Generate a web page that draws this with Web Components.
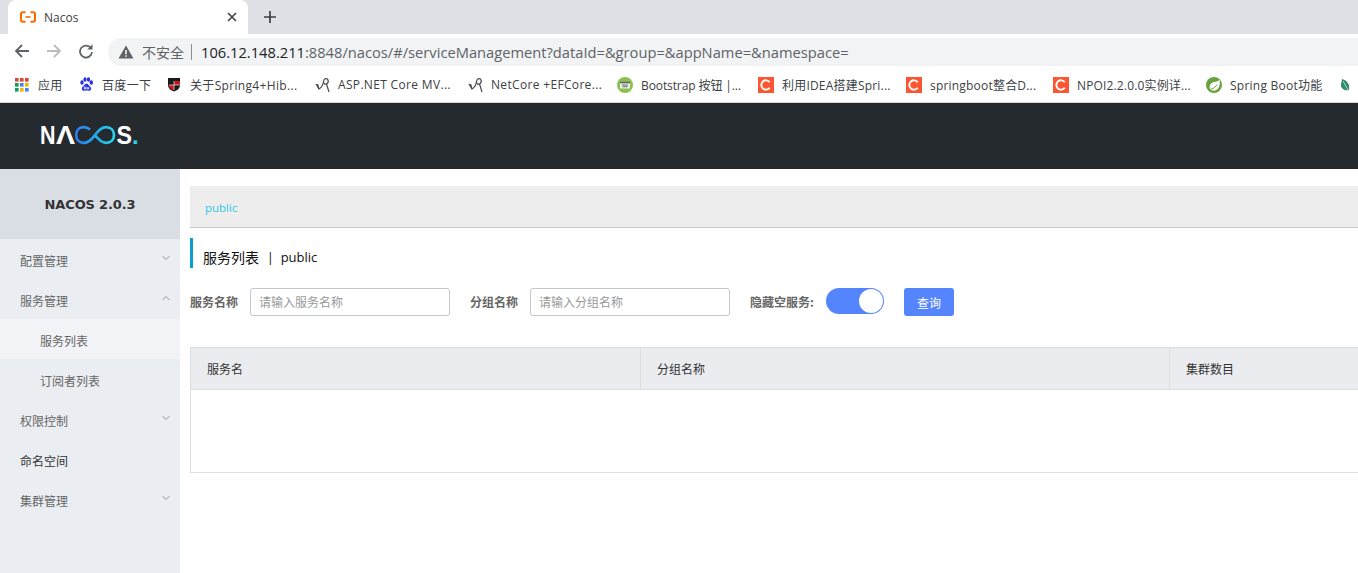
<!DOCTYPE html>
<html lang="zh"><head><meta charset="utf-8"><title>Nacos</title>
<style>
html,body{margin:0;padding:0;height:573px;overflow:hidden;background:#fff;font-family:"Noto Sans","Noto Sans CJK SC",sans-serif}
body{display:flex;flex-direction:column}
</style></head><body>
<browser-tabs></browser-tabs>
<browser-toolbar></browser-toolbar>
<bookmark-bar>
<book-mark w="64" icon="apps">应用</book-mark>
<book-mark w="88" icon="baidu">百度一下</book-mark>
<book-mark w="148" icon="shield">关于Spring4+Hib...</book-mark>
<book-mark w="153" icon="asp">ASP.NET Core MV...</book-mark>
<book-mark w="149" icon="asp">NetCore +EFCore...</book-mark>
<book-mark w="141" icon="boot" style="letter-spacing:-.1px">Bootstrap 按钮 |...</book-mark>
<book-mark w="148" icon="c" style="letter-spacing:.2px">利用IDEA搭建Spri...</book-mark>
<book-mark w="147" icon="c" style="letter-spacing:.2px">springboot整合D...</book-mark>
<book-mark w="153" icon="c" style="letter-spacing:.15px">NPOI2.2.0.0实例详...</book-mark>
<book-mark w="134" icon="spring" style="letter-spacing:.25px">Spring Boot功能</book-mark>
<book-mark w="18" icon="leaf"></book-mark>
</bookmark-bar>
<nacos-header></nacos-header>
<div style="display:flex;flex:1;min-height:0">
<side-nav>
<nav-item chev="down">配置管理</nav-item>
<nav-item chev="up">服务管理</nav-item>
<nav-item sub active>服务列表</nav-item>
<nav-item sub>订阅者列表</nav-item>
<nav-item chev="down">权限控制</nav-item>
<nav-item strong>命名空间</nav-item>
<nav-item chev="down">集群管理</nav-item>
</side-nav>
<service-page></service-page>
</div>
<script>
const def=(n,html,extra)=>customElements.define(n,class extends HTMLElement{constructor(){super();this.attachShadow({mode:'open'}).innerHTML=typeof html==='function'?html(this):html;}connectedCallback(){extra&&extra(this)}});
const UI='"Open Sans","Noto Sans CJK SC",sans-serif';
def('browser-tabs',`<style>
:host{display:flex;height:34px;background:#dee1e6;padding-left:8px;box-sizing:border-box;align-items:stretch;flex:none}
.tab{width:240px;background:#fff;border-radius:8px 8px 0 0;display:flex;align-items:center;position:relative;font:12px ${UI};color:#3c4043}
svg{display:block}
.fav{margin:0 0 0 12px}.t{margin-left:8px;flex:1}
.x{margin-right:8px}.plus{margin:10px 0 0 15px}
</style>
<div class="tab">
<svg class="fav" width="16" height="12" viewBox="0 0 16 12"><path d="M5.500 1.200H3Q1 1.200 1 3v6q0 1.800 2 1.800h2.500M10.500 1.200H13q2 0 2 1.800v6q0 1.800-2 1.800h-2.500" fill="none" stroke="#ff6a00" stroke-width="2"/><path d="M5.500 6h5" stroke="#ff6a00" stroke-width="1.600"/></svg>
<span class="t">Nacos</span>
<svg class="x" width="16" height="16" viewBox="0 0 16 16"><path d="M4 4l8 8M12 4l-8 8" stroke="#45484c" stroke-width="1.700"/></svg>
</div>
<svg class="plus" width="14" height="14" viewBox="0 0 14 14"><path d="M7 1v12M1 7h12" stroke="#3c4043" stroke-width="1.700"/></svg>`);
def('browser-toolbar',`<style>
:host{display:flex;height:32px;background:#fff;flex:none;box-sizing:border-box;padding-top:4px;padding-left:14px;align-items:flex-start}
svg{display:block;flex:none}
.b{width:16px;height:16px;margin-top:5px}
.o{margin-left:14px;flex:1;height:28px;background:#f1f3f4;border-radius:14px 0 0 14px;display:flex;align-items:center;font:14.700px ${UI};color:#5f6368;white-space:nowrap;padding-left:10px}
.ns{font:14px "Noto Sans CJK SC",sans-serif;color:#5f6368;margin-left:8px}
.sep{width:1px;height:16px;background:#8a8d91;margin:0 9px 0 7px}
b{font-weight:400;color:#202124}
</style>
<svg class="b" viewBox="0 0 16 16"><path d="M15 8H2M8 2L2 8l6 6" fill="none" stroke="#5f6368" stroke-width="1.800"/></svg>
<svg class="b" style="margin-left:16px" viewBox="0 0 16 16"><path d="M1 8h13M8 2l6 6-6 6" fill="none" stroke="#babcbe" stroke-width="1.800"/></svg>
<svg class="b" style="margin-left:16px" viewBox="0 0 16 16"><path d="M13 5.200A6 6 0 1 0 14 9" fill="none" stroke="#5f6368" stroke-width="1.800"/><path d="M14.500 1.200v5.300H9.200z" fill="#5f6368"/></svg>
<div class="o"><svg width="16" height="14" viewBox="0 0 16 14"><path d="M8 .5L15.500 13.500H.5z" fill="#5f6368"/><path d="M7.200 5h1.600v4.300H7.200zM7.200 10.200h1.600v1.600H7.200z" fill="#f1f3f4"/></svg><span class="ns">不安全</span><span class="sep"></span><span><b>106.12.148.211</b>:8848/nacos/#/serviceManagement?dataId=&amp;group=&amp;appName=&amp;namespace=</span></div>`);
def('bookmark-bar',`<style>:host{display:flex;height:37px;background:#fff;flex:none;box-sizing:border-box;padding:1px 0 0 15px;border-bottom:1px solid #d2d4d7;align-items:center;overflow:hidden;letter-spacing:.33px}</style><slot></slot>`);
const ICONS={
apps:`<svg width="14" height="14" viewBox="0 0 14 14">${[['#db4437','#db4437','#db4437'],['#0f9d58','#4285f4','#f4b400'],['#0f9d58','#f4b400','#4285f4']].map((r,y)=>r.map((c,x)=>`<rect x="${x*5}" y="${y*5}" width="3.600" height="3.600" fill="${c}"/>`).join('')).join('')}</svg>`,
baidu:`<svg width="15" height="15" viewBox="0 0 15 15" fill="#2932e1"><ellipse cx="3" cy="5.500" rx="1.700" ry="2.200"/><ellipse cx="6" cy="2.500" rx="1.600" ry="2.200"/><ellipse cx="9.500" cy="2.500" rx="1.600" ry="2.200"/><ellipse cx="12.300" cy="5.500" rx="1.700" ry="2.200"/><path d="M7.500 6.500C5.500 6.500 5 9 3.500 10c-1.500 1.300-.5 4 2 3.800 1.500-.3 2.600-.3 4 0 2.500.2 3.500-2.500 2-3.800C10 9 9.500 6.500 7.500 6.500z"/><path d="M5.300 9.500v2.500h1.500V9.500M8.200 10v2h1.600v-2" fill="none" stroke="#fff" stroke-width=".8"/></svg>`,
shield:`<svg width="14" height="15" viewBox="0 0 14 15"><path d="M1 1h12v8q-1 4-6 5.500Q2 13 1 9z" fill="#1b1b1b"/><path d="M7 4h6v4H7zM1.500 8H7v5.500Q3 12 1.500 9z" fill="#c8161d"/><path d="M7 4v9M2 8h11" stroke="#fff" stroke-width=".6"/></svg>`,
asp:`<svg width="16" height="16" viewBox="0 0 16 16" fill="none" stroke="#4a4a4a" stroke-width="1.200"><path d="M1 7l3 5q4-2 5-9.500"/><path d="M9 2.500q3-2 4 .5t-1.500 4q-3 .8-3-2.500"/><path d="M11.500 7l2.500 8M4 12l-1.500-5"/></svg>`,
boot:`<svg width="16" height="16" viewBox="0 0 16 16"><circle cx="8" cy="8" r="8" fill="#8cc152"/><rect x="3" y="4.500" width="10" height="7" rx=".5" fill="#e9efe2"/><rect x="3" y="4.500" width="10" height="1.800" fill="#5c6b4e"/><path d="M5 8h6M5.500 9.700h5" stroke="#55606a" stroke-width=".9"/></svg>`,
c:`<svg width="16" height="16" viewBox="0 0 16 16"><rect width="16" height="16" fill="#fc5531"/><path d="M11.800 5.200A4.700 4.700 0 1 0 11.800 10.800" fill="none" stroke="#fff" stroke-width="1.900"/></svg>`,
spring:`<svg width="16" height="16" viewBox="0 0 16 16"><circle cx="8" cy="8" r="8" fill="#68a33f"/><path d="M13.500 2.500C12 5 9 4.500 6.500 5.500 3.500 7 3 10.500 4.500 12.500 6.500 14.500 11 14 13 10 14 7.500 14 5 13.500 2.500z" fill="#fff"/><path d="M4.800 12.300C8 11.500 10 9.500 11 7.500" fill="none" stroke="#68a33f" stroke-width="1"/></svg>`,
leaf:`<svg width="11" height="14" viewBox="0 0 11 14"><path d="M2 1c6 2 8 6 7 11-4 1-8-1-8-5 0-2 1-4 1-6z" fill="#2e8b6f"/><path d="M3 3l5 9" stroke="#cfe6dc" stroke-width=".8"/></svg>`};
def('book-mark',h=>`<style>:host{display:flex;flex:none;align-items:center;width:${h.getAttribute('w')}px;box-sizing:border-box;font:12px ${UI};color:#3c4043;white-space:nowrap;height:100%}.i{flex:none;width:${/boot|^c$|spring/.test(h.getAttribute('icon'))?24:23}px;display:flex}svg{display:block}</style><span class="i">${ICONS[h.getAttribute('icon')]}</span><slot></slot>`);
def('nacos-header',`<style>:host{display:flex;height:66px;background:#252a2f;flex:none;align-items:center;padding-left:40px;box-sizing:border-box}svg{display:block}text{font-family:"Liberation Sans",sans-serif;font-weight:700;font-size:25px;fill:#fff}</style>
<svg width="104" height="36" viewBox="0 0 104 36" role="img" aria-label="NACOS.">
<defs><linearGradient id="g" gradientUnits="userSpaceOnUse" x1="36" x2="74" y1="0" y2="0"><stop offset="0" stop-color="#2d7cf0"/><stop offset=".5" stop-color="#22a6ec"/><stop offset="1" stop-color="#2bd2ea"/></linearGradient></defs>
<text x="0" y="26" textLength="15.500" lengthAdjust="spacingAndGlyphs">N</text><text x="16" y="26" textLength="19" lengthAdjust="spacingAndGlyphs">Λ</text>
<path d="M50 11.500C47.500 9.500 45 9.200 43.500 9.200 39 9.200 36.200 12.500 36.200 17S39 24.800 43.500 24.800C49 24.800 52 21 55 17S61 9.200 66 9.200C71 9.200 74 12.500 74 17S71 24.800 66 24.800C61 24.800 58 21 55 17" fill="none" stroke="url(#g)" stroke-width="2.700"/>
<text x="76.500" y="26" textLength="15.500" lengthAdjust="spacingAndGlyphs">S</text><text x="92" y="26" style="fill:#2bd2ea;font-size:24px">.</text></svg>`);
def('side-nav',`<style>:host{display:block;width:180px;flex:none;background:#eaedf1}.h{height:70px;box-sizing:border-box;background:#d9dee4;display:flex;align-items:center;justify-content:center;font:700 13px "DejaVu Sans",sans-serif;letter-spacing:-.15px;color:#333}</style><div class="h">NACOS 2.0.3</div><slot></slot>`);
def('nav-item',h=>{const sub=h.hasAttribute('sub'),c=h.getAttribute('chev');return `<style>:host{display:flex;height:40px;box-sizing:border-box;padding:3px 0 0 ${sub?40:20}px;align-items:center;font:12px "Noto Sans CJK SC",sans-serif;color:${h.hasAttribute('strong')?'#333':'#666'};position:relative;background:${h.hasAttribute('active')?'#f2f3f7':'transparent'}}svg{position:absolute;left:162px;top:16px}</style><slot></slot>${c?`<svg width="8" height="6" viewBox="0 0 8 6"><path d="${c==='down'?'M.5 1L4 4.500 7.500 1':'M.5 5L4 1.500 7.500 5'}" fill="none" stroke="#8f96a3" stroke-width="1"/></svg>`:''}`});
def('service-page',`<style>
:host{display:block;flex:1;min-width:0;padding:17px 0 0 10px;overflow:hidden;font:12px "Noto Sans CJK SC",sans-serif}
.crumb{height:42px;background:#ededed;border-bottom:1px solid #ccc;box-sizing:border-box;display:flex;align-items:center;padding:1px 0 0 15px;color:#33c6e3;font:11.500px "Open Sans",sans-serif}
.title{margin-top:10px;height:30px;box-sizing:border-box;border-left:3px solid #09a0d0;padding:7px 0 0 10px;display:flex;align-items:center;font:14px "Noto Sans CJK SC",sans-serif;color:#111;white-space:pre}
.title span{font:13px "Open Sans",sans-serif;margin-left:1px}
.form{margin-top:20px;display:flex;align-items:flex-start;height:28px}
label{font-weight:700;color:#666;line-height:28px;white-space:nowrap}
.inp{box-sizing:border-box;width:200px;height:28px;border:1px solid #c4c6cf;border-radius:3px;padding-left:8px;line-height:26px;color:#999}
.sw{margin-left:12px;width:58px;height:26px;border-radius:13px;background:#5584ff;position:relative}
.sw i{position:absolute;right:1px;top:1px;width:24px;height:24px;border-radius:50%;background:#fff}
.btn{margin-left:20px;width:50px;height:28px;border-radius:3px;background:#5584ff;color:#fff;display:flex;align-items:center;justify-content:center}
table{margin-top:31px;width:100%;border-collapse:collapse;table-layout:fixed;border-left:1px solid #dcdee3;border-bottom:1px solid #dcdee3}
th{height:42px;box-sizing:border-box;background:#ebecf0;border:1px solid #dcdee3;border-left:0;border-right:0;font-weight:400;text-align:left;color:#333;padding:0 0 0 16px}
th+th{border-left:1px solid #dcdee3}
td{height:82px;padding:0}
</style>
<div class="crumb">public</div>
<div class="title">服务列表<span>  |  public</span></div>
<div class="form"><label style="width:60px">服务名称</label><div class="inp">请输入服务名称</div>
<label style="margin-left:20px;width:60px">分组名称</label><div class="inp">请输入分组名称</div>
<label style="margin-left:20px">隐藏空服务:</label><div class="sw"><i></i></div><div class="btn">查询</div></div>
<table><colgroup><col style="width:450px"><col style="width:529px"><col></colgroup><tr><th>服务名</th><th>分组名称</th><th>集群数目</th></tr><tr><td colspan="3"></td></tr></table>`);
</script>
</body></html>
